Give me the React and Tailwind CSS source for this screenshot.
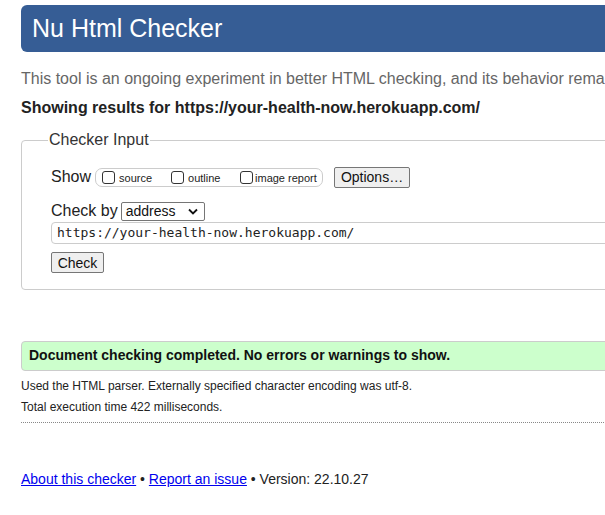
import React from 'react';

function Box({ label, width, gap }) {
  return (
    <span className="flex items-center whitespace-nowrap" style={{ width }}>
      <span className="inline-block w-[13px] h-[13px] border border-[#333] rounded-[3px] bg-white"></span>
      <span className="mt-[2px]" style={{ marginLeft: gap }}>{label}</span>
    </span>
  );
}

export default function App() {
  return (
    <div className="w-[605px] h-[515px] overflow-hidden bg-white" style={{ fontFamily: '"Liberation Sans", Arial, sans-serif' }}>
      <div className="w-[720px] pl-[21px]">
        <div className="mt-[5px] h-[47px] rounded-[6px] bg-[#365d95] pl-[11px] flex items-center">
          <h1 className="text-[25px] text-white leading-none pb-[1px]">Nu Html Checker</h1>
        </div>

        <p className="mt-[18px] text-[16px] leading-[18px] text-[#666] whitespace-nowrap">
          This tool is an ongoing experiment in better HTML checking, and its behavior remains subject to change
        </p>
        <p className="mt-[11px] text-[16px] leading-[18px] font-bold text-[#222]">
          Showing results for https://your-health-now.herokuapp.com/
        </p>

        <fieldset className="mt-[14px] border border-[#ccc] rounded-[4px] px-0 pb-[14px] pt-[3px]">
          <legend className="ml-[26px] px-[1px] text-[16px] leading-[18px] text-[#333]">Checker Input</legend>

          <div className="pl-[29px]">
            <div className="mt-[14px] flex items-center h-[22px]">
              <span className="text-[16px] text-[#222]">Show</span>
              <div className="ml-[4px] h-[19px] w-[228px] border border-[#ccc] rounded-[7px] flex items-center pl-[6px] text-[11px] text-[#222]">
                <Box label="source" width={69} gap={4} />
                <Box label="outline" width={69} gap={4} />
                <Box label="image report" width={78} gap={2} />
              </div>
              <button className="ml-[11px] h-[21px] w-[76px] border border-[#767676] rounded-[2px] bg-[#efefef] text-[14px] text-[#111] leading-none">
                Options…
              </button>
            </div>

            <div className="mt-[12px] flex items-center h-[22px]">
              <span className="text-[16px] text-[#222]">Check by</span>
              <div className="ml-[3px] h-[19px] w-[84px] border border-[#767676] rounded-[2px] flex items-center justify-between pl-[4px] pr-[6px] text-[14px] text-[#111]">
                <span>address</span>
                <svg width="10" height="7" viewBox="0 0 10 7"><path d="M1 1.5 L5 5.5 L9 1.5" fill="none" stroke="#111" strokeWidth="1.8" /></svg>
              </div>
            </div>

            <div className="h-[22px] border border-[#ccc] rounded-[4px] flex items-center pl-[5px] text-[13px] text-[#222]" style={{ fontFamily: '"DejaVu Sans Mono", "Liberation Mono", monospace' }}>
              https://your-health-now.herokuapp.com/
            </div>

            <button className="mt-[8px] h-[21px] w-[53px] border border-[#767676] rounded-[2px] bg-[#efefef] text-[14px] text-[#111] leading-none">
              Check
            </button>
          </div>
        </fieldset>

        <div className="mt-[51px] h-[30px] border border-[#ccc] rounded-[4px] bg-[#ccffcc] flex items-center pl-[7px]">
          <span className="text-[14px] font-bold text-[#111]">Document checking completed. No errors or warnings to show.</span>
        </div>

        <p className="mt-[8px] text-[12px] leading-[14px] text-[#222]">Used the HTML parser. Externally specified character encoding was utf-8.</p>
        <p className="mt-[7px] text-[12px] leading-[14px] text-[#222]">Total execution time 422 milliseconds.</p>
        <div className="mt-[8px] border-t border-dotted border-[#888]"></div>

        <p className="mt-[48px] text-[14px] leading-[16px] text-[#222]">
          <a href="#" className="text-[#0000ee] underline">About this checker</a> • <a href="#" className="text-[#0000ee] underline">Report an issue</a> • Version: 22.10.27
        </p>
      </div>
    </div>
  );
}
